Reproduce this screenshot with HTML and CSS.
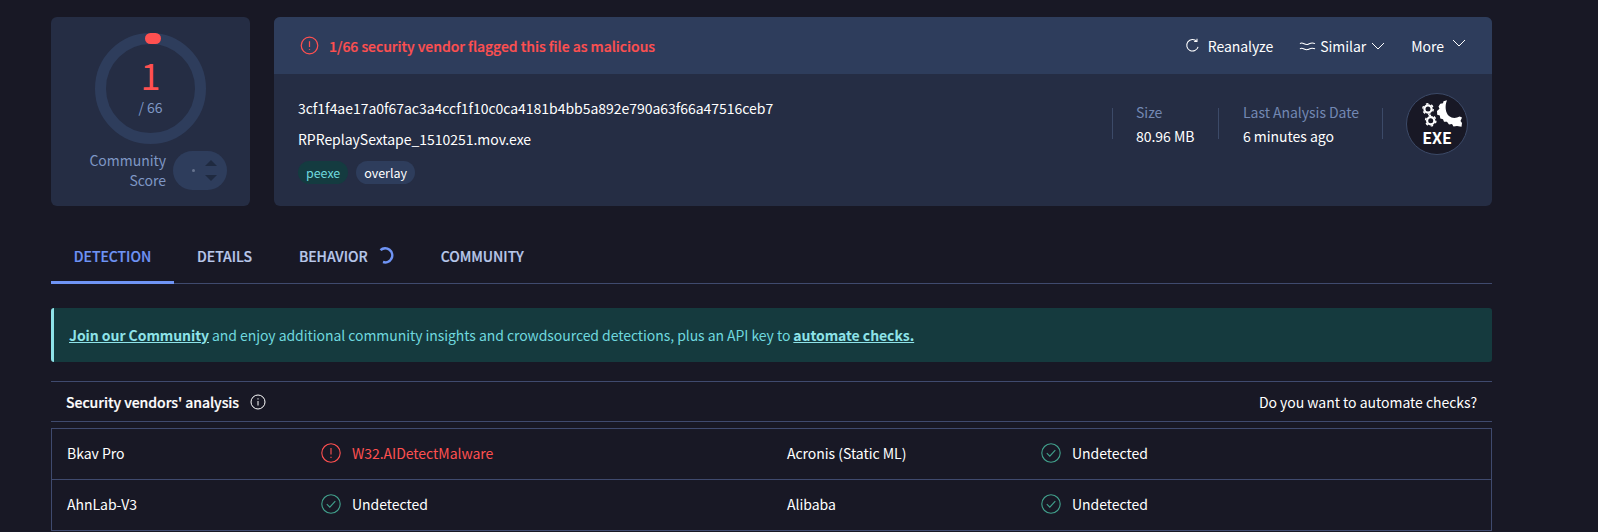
FILE: index.html
```html
<!DOCTYPE html>
<html lang="en">
<head>
    <meta charset="UTF-8">
    <title>VirusTotal - File</title>
    <link rel="stylesheet" href="styles.css">
</head>
<body>
    <div class="top">
        <div class="score-card">
            <div class="ring">
                <span class="ring-dot"></span>
                <div class="ring-num">1</div>
                <div class="ring-total">/ 66</div>
            </div>
            <div class="community">
                <div class="community-label">Community<br>Score</div>
                <div class="vote">
                    <span class="vote-dot"></span>
                    <span class="vote-arrows"><i class="arrow-up"></i><i class="arrow-down"></i></span>
                </div>
            </div>
        </div>

        <div class="file-card">
            <div class="file-head">
                <div class="alert">
                    <svg class="alert-icon" viewBox="0 0 20 20"><circle cx="10" cy="10" r="8.7"/><path d="M10 5.5v6M10 13.6v1"/></svg>
                    <span>1/66 security vendor flagged this file as malicious</span>
                </div>
                <div class="actions">
                    <span class="action">
                        <svg class="act-icon" viewBox="0 0 16 16"><path d="M12.5 3.4A6.2 6.2 0 1 0 14 9.5"/><path d="M12.8 0.8v3h-3"/></svg>
                        Reanalyze
                    </span>
                    <span class="action similar">
                        <svg class="sim-icon" viewBox="0 0 18 12"><path d="M1 3.5c3-2.2 5 1.800 8 .8s4-2.400 8-.8"/><path d="M1 9c3-2.200 5 1.800 8 .8s4-2.400 8-.8"/></svg>
                        Similar
                        <svg class="chev" viewBox="0 0 14 8"><path d="M1 1l6 6 6-6"/></svg>
                    </span>
                    <span class="action more">
                        More
                        <svg class="chev chev-more" viewBox="0 0 14 8"><path d="M1 1l6 6 6-6"/></svg>
                    </span>
                </div>
            </div>
            <div class="file-body">
                <div class="file-info">
                    <div class="hash">3cf1f4ae17a0f67ac3a4ccf1f10c0ca4181b4bb5a892e790a63f66a47516ceb7</div>
                    <div class="filename">RPReplaySextape_1510251.mov.exe</div>
                    <div class="tags">
                        <span class="tag tag-green">peexe</span>
                        <span class="tag">overlay</span>
                    </div>
                </div>
                <div class="meta">
                    <div class="meta-item meta-size">
                        <div class="meta-label">Size</div>
                        <div class="meta-value">80.96 MB</div>
                    </div>
                    <div class="meta-item meta-date">
                        <div class="meta-label">Last Analysis Date</div>
                        <div class="meta-value">6 minutes ago</div>
                    </div>
                    <div class="exe-wrap">
                        <div class="exe">
                            <svg class="exe-gears" viewBox="0 0 50 32">
                                <circle class="gear-ring" cx="16" cy="9" r="3.600"/>
                                <circle class="gear-teeth" cx="16" cy="9" r="5.200"/>
                                <circle class="gear-ring" cx="18.700" cy="20.700" r="3.600"/>
                                <circle class="gear-teeth" cx="18.700" cy="20.700" r="5.200"/>
                                <path class="gear-big" d="M35 .3L31.500 1.200 31 3.300 28.300 3.800 26.500 6.500 27.500 8.800 25 11 25.200 14.800 27.800 15.500 28.300 18.500 31 19.200 32 21.800 35 21.700 37 24.500 40 24 41.500 26.500 45 26 49.500 26.800 50 23 48.500 21 50 17.500 47.700 16.500C44 18.500 40 18.500 37 16 33.500 13 32.500 6 35 .3z"/>
                            </svg>
                            <span class="exe-text">EXE</span>
                        </div>
                    </div>
                </div>
            </div>
        </div>
    </div>

    <div class="tabs">
        <span class="tab tab-active">DETECTION</span>
        <span class="tab">DETAILS</span>
        <span class="tab tab-behavior">BEHAVIOR
            <svg class="spinner" viewBox="0 0 18 18"><path d="M2.500 3.200A7 7 0 1 1 5 15"/></svg>
        </span>
        <span class="tab">COMMUNITY</span>
    </div>

    <div class="banner">
        <a>Join our Community</a><span class="banner-text">and enjoy additional community insights and crowdsourced detections, plus an API key to</span><a>automate checks.</a>
    </div>

    <div class="section-head">
        <div class="section-title">
            Security vendors' analysis
            <svg class="info-icon" viewBox="0 0 16 16"><circle cx="8" cy="8" r="7"/><path d="M8 7v4.500M8 4.300v1.200"/></svg>
        </div>
        <div class="section-link">Do you want to automate checks?</div>
    </div>

    <div class="vendors">
        <div class="vendor-row">
            <div class="vendor">Bkav Pro</div>
            <div class="result result-bad">
                <svg class="res-icon" viewBox="0 0 20 20"><circle cx="10" cy="10" r="9.200"/><path d="M10 5v6.500M10 13.800v1.200"/></svg>
                W32.AIDetectMalware
            </div>
            <div class="vendor">Acronis (Static ML)</div>
            <div class="result">
                <svg class="res-icon res-ok" viewBox="0 0 20 20"><circle cx="10" cy="10" r="9.200"/><path d="M5.800 10.200l3 3 5.500-6"/></svg>
                Undetected
            </div>
        </div>
        <div class="vendor-row">
            <div class="vendor">AhnLab-V3</div>
            <div class="result">
                <svg class="res-icon res-ok" viewBox="0 0 20 20"><circle cx="10" cy="10" r="9.200"/><path d="M5.800 10.200l3 3 5.500-6"/></svg>
                Undetected
            </div>
            <div class="vendor">Alibaba</div>
            <div class="result">
                <svg class="res-icon res-ok" viewBox="0 0 20 20"><circle cx="10" cy="10" r="9.200"/><path d="M5.800 10.200l3 3 5.500-6"/></svg>
                Undetected
            </div>
        </div>
    </div>
</body>
</html>
```

FILE: styles.css
```css
html, body {
    height: 532px;
    overflow: hidden;
}
body {
    margin: 0;
    padding: 17px 106px 0 51px;
    box-sizing: border-box;
    background: #181825;
    color: #fff;
    font-family: "Noto Sans CJK JP", "Noto Sans", sans-serif;
    font-size: 14px;
    line-height: 20px;
    letter-spacing: -0.03px;
}
svg {
    fill: none;
    flex: none;
}

/* top cards */
.top {
    display: flex;
    gap: 24px;
    height: 189px;
}
.score-card {
    width: 199px;
    flex: none;
    background: #252d44;
    border-radius: 6px;
    display: flex;
    flex-direction: column;
    align-items: center;
    padding-top: 16px;
    box-sizing: border-box;
}
.ring {
    position: relative;
    width: 111px;
    height: 111px;
    box-sizing: border-box;
    border: 11px solid #2e3d5c;
    border-radius: 50%;
    text-align: center;
    color: #ff5050;
}
.ring-dot {
    position: absolute;
    top: -11px;
    left: 39px;
    width: 16px;
    height: 11px;
    background: #ff5050;
    border-radius: 6px;
}
.ring-num {
    font-size: 36px;
    line-height: 32px;
    margin-top: 14px;
}
.ring-total {
    color: #7f97c5;
    line-height: 20px;
    margin-top: 7px;
}
.community {
    display: flex;
    align-items: flex-start;
    align-self: flex-end;
    gap: 7px;
    margin-top: 6px;
    padding-right: 23px;
}
.community-label {
    text-align: right;
    color: #7f97c5;
}
.vote {
    width: 54px;
    height: 39px;
    margin-top: 1px;
    background: #2e3d5c;
    border-radius: 20px;
    display: flex;
    align-items: center;
    justify-content: flex-end;
    gap: 10px;
    padding-right: 10px;
    box-sizing: border-box;
}
.vote-dot {
    width: 3px;
    height: 3px;
    background: #66738e;
    border-radius: 50%;
}
.vote-arrows {
    display: flex;
    flex-direction: column;
    gap: 9px;
}
.arrow-up, .arrow-down {
    display: block;
    width: 0;
    height: 0;
    border-left: 6px solid transparent;
    border-right: 6px solid transparent;
}
.arrow-up {
    border-bottom: 6px solid #1f2a40;
}
.arrow-down {
    border-top: 6px solid #1f2a40;
}

.file-card {
    flex: 1;
    background: #252d44;
    border-radius: 6px;
    overflow: hidden;
}
.file-head {
    height: 57px;
    background: #2e3d5c;
    display: flex;
    align-items: center;
    justify-content: space-between;
    padding: 0 26px;
}
.alert {
    display: flex;
    align-items: center;
    gap: 10px;
    color: #ff5050;
    font-weight: 500;
    -webkit-text-stroke: 0.2px #ff5050;
}
.alert-icon {
    width: 19px;
    height: 19px;
    stroke: #ff5050;
    stroke-width: 1.300;
}
.actions {
    display: flex;
    align-items: center;
}
.action {
    display: flex;
    align-items: center;
}
.act-icon {
    width: 15px;
    height: 15px;
    margin-right: 8px;
    stroke: #fff;
    stroke-width: 1.100;
}
.similar {
    margin-left: 26px;
}
.sim-icon {
    width: 17px;
    height: 12px;
    margin-right: 4px;
    stroke: #fff;
    stroke-width: 1.100;
}
.chev {
    width: 14px;
    height: 8px;
    margin-left: 5px;
    stroke: #fff;
    stroke-width: 1;
}
.more {
    margin-left: 26px;
}
.chev-more {
    margin-left: 8px;
    margin-top: -5px;
}

.file-body {
    display: flex;
    justify-content: space-between;
    padding: 0 24px;
}
.hash {
    margin-top: 24px;
}
.filename {
    margin-top: 11px;
}
.tags {
    display: flex;
    gap: 8px;
    margin-top: 12px;
}
.tag {
    background: #2e3d5c;
    border-radius: 12px;
    padding: 0 8px;
    height: 23px;
    line-height: 23px;
    font-size: 12.500px;
}
.tag-green {
    background: #143b40;
    color: #6fd8de;
}
.meta {
    display: flex;
    align-items: flex-start;
    margin-top: 22px;
}
.meta-item {
    border-left: 1px solid #3c4a68;
    height: 31px;
    margin-top: 12px;
    padding-left: 24px;
}
.meta-size {
    width: 82px;
    padding-left: 23px;
}
.meta-date {
    width: 139px;
}
.meta-label {
    color: #7388b3;
    margin-top: -6px;
}
.meta-value {
    margin-top: 4px;
}
.exe-wrap {
    border-left: 1px solid #3c4a68;
    height: 31px;
    margin-top: 12px;
    padding-left: 23px;
    display: flex;
    align-items: center;
}
.exe {
    width: 62px;
    height: 62px;
    box-sizing: border-box;
    border: 1px solid #3c4a68;
    border-radius: 50%;
    background: #181825;
    display: flex;
    flex-direction: column;
    align-items: center;
}
.exe-gears {
    width: 50px;
    height: 32px;
    margin-top: 6px;
}
.gear-ring {
    stroke: #fff;
    stroke-width: 2.200;
}
.gear-teeth {
    stroke: #fff;
    stroke-width: 1.400;
    stroke-dasharray: 2.500 2.950;
}
.gear-big {
    fill: #fff;
}
.exe-text {
    font-weight: 700;
    font-size: 16px;
    line-height: 18px;
    margin-top: -4px;
}

/* tabs */
.tabs {
    display: flex;
    height: 63px;
    margin-top: 14px;
    border-bottom: 1px solid #3f4a6e;
}
.tab {
    display: flex;
    align-items: center;
    justify-content: center;
    gap: 10px;
    padding: 10px 23px 0;
    height: 64px;
    box-sizing: border-box;
    border-bottom: 3px solid transparent;
    color: #b9c8ea;
    font-weight: 500;
    -webkit-text-stroke: 0.2px;
}
.tab-active {
    width: 123px;
    color: #6f94f5;
    border-bottom-color: #6f94f5;
}
.tab-behavior {
    margin: 0 -1px 0 1px;
}
.spinner {
    width: 18px;
    height: 18px;
    stroke: #6f94f5;
    stroke-width: 2.500;
}

/* banner */
.banner {
    margin-top: 24px;
    height: 54px;
    box-sizing: border-box;
    background: #153a3e;
    border-left: 3px solid #8ee3e8;
    border-radius: 3px;
    display: flex;
    align-items: center;
    padding-left: 15px;
    color: #6fd8de;
    letter-spacing: -0.06px;
}
.banner a {
    color: #8ee3e8;
    font-weight: 700;
    text-decoration: underline;
}
.banner-text {
    margin: 0 3px;
}

/* vendors */
.section-head {
    margin-top: 19px;
    height: 41px;
    box-sizing: border-box;
    border-top: 1px solid #3f4a6e;
    border-bottom: 1px solid #3f4a6e;
    display: flex;
    align-items: center;
    justify-content: space-between;
    padding: 0 15px;
}
.section-title {
    display: flex;
    align-items: center;
    gap: 11px;
    font-weight: 500;
    -webkit-text-stroke: 0.2px #fff;
}
.info-icon {
    width: 16px;
    height: 16px;
    stroke: #fff;
    stroke-width: 1;
}
.vendors {
    margin-top: 6px;
    border: 1px solid #3f4a6e;
    border-bottom: none;
}
.vendor-row {
    display: grid;
    grid-template-columns: 254px 466px 254px 1fr;
    height: 51px;
    box-sizing: border-box;
    border-bottom: 1px solid #3f4a6e;
    align-items: center;
    padding: 0 0 2px 15px;
}
.result {
    display: flex;
    align-items: center;
    gap: 11px;
}
.result-bad {
    color: #ff5050;
}
.res-icon {
    width: 20px;
    height: 20px;
    stroke: #ff5050;
    stroke-width: 1.100;
}
.res-ok {
    stroke: #41a08c;
}
```
